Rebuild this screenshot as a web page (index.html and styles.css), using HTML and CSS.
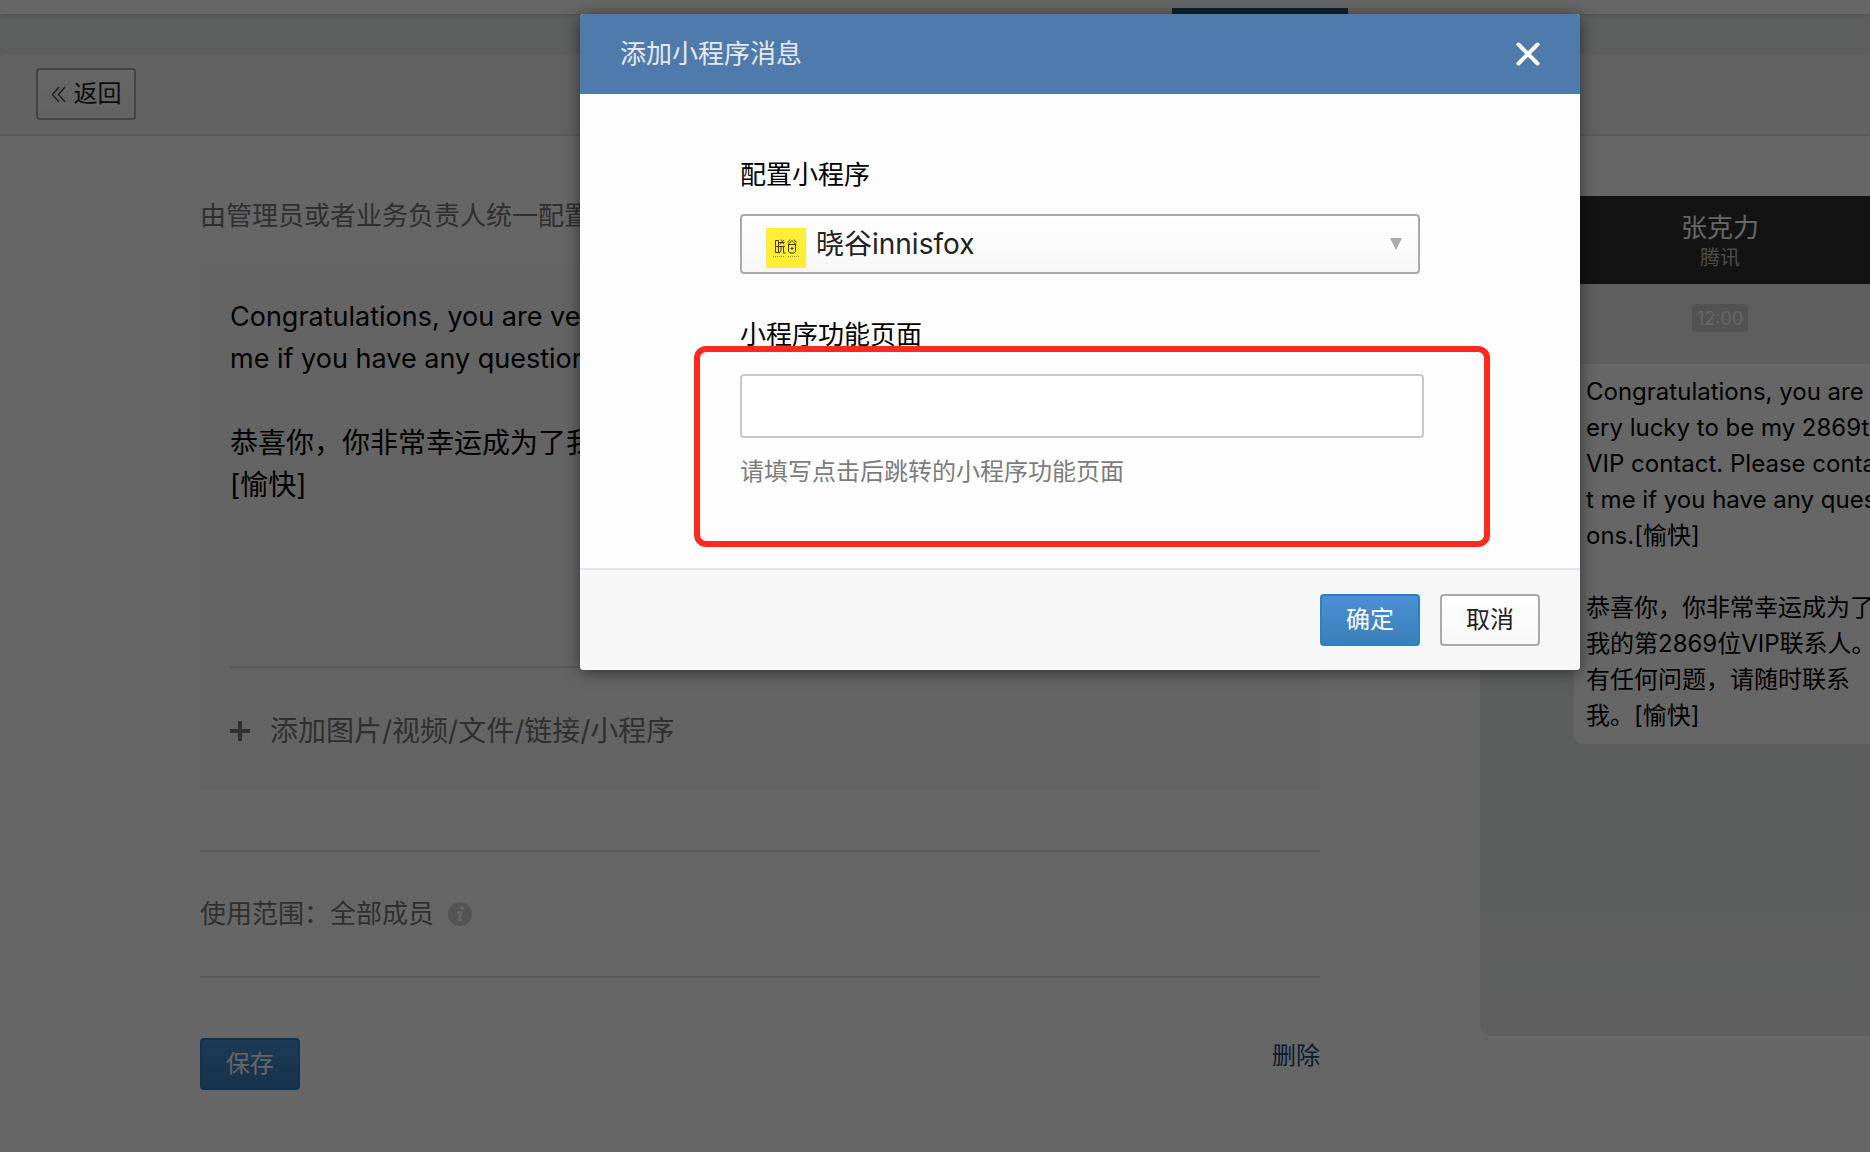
FILE: index.html
```
<!DOCTYPE html>
<html lang="zh-CN">
<head>
<meta charset="utf-8">
<title>添加小程序消息</title>
<link rel="stylesheet" href="styles.css">
</head>
<body>
<div class="page">
  <nav class="topbar"><span class="topbar-active"></span></nav>
  <main class="panel">
    <header class="panel-header">
      <button type="button" class="btn btn-back">
        <svg width="15" height="17" viewBox="0 0 15 17" fill="none" stroke="#555" stroke-width="1.500"><path d="M8 1L1.500 8.500L8 16M14 1L7.500 8.500L14 16"/></svg>
        返回
      </button>
    </header>
    <div class="content">
      <section class="form">
        <p class="intro">由管理员或者业务负责人统一配置</p>
        <div class="editor">
          <div class="editor-text">
            <p class="editor-latin">Congratulations, you are ve<br>me if you have any question</p>
            <p>恭喜你，你非常幸运成为了我<br>[愉快]</p>
          </div>
          <button type="button" class="attach">
            <svg width="20" height="20" viewBox="0 0 20 20" fill="#787878"><path d="M8 0h4v8h8v4h-8v8H8v-8H0V8h8z"/></svg>
            添加图片/视频/文件/链接/小程序
          </button>
        </div>
        <div class="scope">
          <span>使用范围：全部成员</span>
          <svg width="24" height="24" viewBox="0 0 24 24"><circle cx="12" cy="12" r="12" fill="#d2d2d2"/><circle cx="14" cy="6" r="2" fill="#fff"/><path d="M9 10.500h4l-2 7.500q.5 1 2.500-1" fill="none" stroke="#fff" stroke-width="2.500"/></svg>
        </div>
        <div class="actions">
          <button type="button" class="btn btn-primary">保存</button>
          <a class="delete" href="#">删除</a>
        </div>
      </section>
      <aside class="phone">
        <header class="phone-header">
          <strong>张克力</strong>
          <span>腾讯</span>
        </header>
        <div class="phone-time"><time>12:00</time></div>
        <p class="bubble">Congratulations, you are<br>ery lucky to be my 2869t<br>VIP contact. Please conta<br>t me if you have any ques<br>ons.[愉快]<br><br>恭喜你，你非常幸运成为了<br>我的第2869位VIP联系人。<br>有任何问题，请随时联系<br>我。[愉快]</p>
      </aside>
    </div>
  </main>
  <div class="overlay">
    <div class="dialog" role="dialog" aria-labelledby="dialog-title">
      <header class="dialog-header">
        <h2 id="dialog-title">添加小程序消息</h2>
        <button type="button" class="close" aria-label="关闭">
          <svg width="24" height="24" viewBox="0 0 24 24" stroke="#fff" stroke-width="4" stroke-linecap="round"><path d="M2.500 2.500L21.500 21.500M21.500 2.500L2.500 21.500"/></svg>
        </button>
      </header>
      <form class="dialog-body">
        <label for="app">配置小程序</label>
        <div class="picker">
          <select id="app"><option>晓谷innisfox</option></select>
          <svg class="picker-logo" width="40" height="40" viewBox="0 0 40 40"><path fill="#ffed37" d="M0 0h40v40H0z"/><g fill="none" stroke="#3b3712" stroke-width="1"><path d="M9.500 12.500h3v12h-3zM9.500 18.500h3M13 14.500h5.500M15 11.500l3 5M18 12l-4 4.500M13 18.500h6M15 18.500v4l-2 3M17.500 18.500v6.500h2"/><path d="M24 11.500l-2 3M28 11.500l2.500 3M26 12.500l-4 4M26 12.500l4 4M22.500 16.500h7v7l-1.500 1.500h-4l-1.500-1.500zM24.500 20.500h3M26 19v3"/></g><path d="M7 28.500h11M22 28.500h11" stroke="#a69a28" stroke-width="1" stroke-dasharray="1 1"/></svg>
          <svg class="picker-arrow" width="12" height="12" viewBox="0 0 12 12" fill="#aaa"><path d="M0 0h12L6 12z"/></svg>
        </div>
        <label for="path">小程序功能页面</label>
        <div class="field">
          <input id="path" type="text" aria-describedby="path-help">
          <p class="help" id="path-help">请填写点击后跳转的小程序功能页面</p>
          <span class="highlight"></span>
        </div>
      </form>
      <footer class="dialog-footer">
        <button type="button" class="btn btn-primary">确定</button>
        <button type="button" class="btn">取消</button>
      </footer>
    </div>
  </div>
</div>
</body>
</html>
```
FILE: styles.css
```
* {
  box-sizing: border-box;
}

body {
  margin: 0;
  background: #fff;
  color: #000;
  font-family: Inter, "Noto Sans CJK SC", sans-serif;
  font-size: 24px;
  line-height: 36px;
}

p,
h2 {
  margin: 0;
  font-weight: 400;
}

svg {
  flex: none;
}

button,
input,
select {
  font: inherit;
}

.page {
  position: relative;
  min-height: 100vh;
  background: #e6edea;
  overflow: hidden;
}

.topbar {
  display: flex;
  align-items: flex-end;
  height: 14px;
  padding-left: 1172px;
  background: #fff;
  box-shadow: 0 1px 4px rgba(0, 0, 0, 0.15);
}

.topbar-active {
  width: 176px;
  height: 6px;
  background: #2a5576;
}

.panel {
  min-height: calc(100vh - 54px);
  margin-top: 40px;
  border-radius: 8px 0 0;
  background: #fff;
}

.panel-header {
  padding: 14px 36px;
  border-bottom: 2px solid #e3e3e3;
  border-radius: 8px 0 0;
  background: #f6f6f6;
}

.btn {
  display: flex;
  align-items: center;
  justify-content: center;
  width: 100px;
  height: 52px;
  padding: 0;
  border: 2px solid #aaa;
  border-radius: 4px;
  background: linear-gradient(#fff, #f7f7f7);
  color: #222;
}

.btn-back {
  gap: 8px;
}

.btn-primary {
  border-color: #2a82c6;
  background: linear-gradient(#4a90d4, #3b80b9);
  color: #fff;
}

.content {
  display: flex;
  align-items: flex-start;
  gap: 160px;
  padding: 60px 0 60px 200px;
}

.form {
  flex: 1;
}

.intro {
  height: 68px;
  color: #787878;
  font-size: 26px;
  line-height: 40px;
}

.editor {
  padding: 32px 30px 30px;
  background: #fafafa;
}

.editor-text {
  min-height: 370px;
  font-size: 28px;
  line-height: 42px;
}

.editor-latin {
  margin-bottom: 42px;
  font-size: 27px;
}

.attach {
  display: flex;
  align-items: center;
  gap: 20px;
  width: 100%;
  padding: 42px 0 8px;
  border: 0;
  border-top: 2px solid #e4e4e4;
  background: none;
  color: #787878;
  font-size: 28px;
  line-height: 42px;
}

.scope {
  display: flex;
  align-items: center;
  gap: 14px;
  height: 128px;
  margin: 60px 0;
  border: solid #e0e0e0;
  border-width: 2px 0;
  color: #787878;
  font-size: 26px;
}

.actions {
  display: flex;
  justify-content: space-between;
}

.delete {
  color: #1a4a7c;
  text-decoration: none;
}

/* Preview phone, running off the right edge of the window */
.phone {
  width: 390px;
  height: 840px;
  border-radius: 0 0 0 12px;
  background: linear-gradient(#e6ebe8 80%, #ebebeb);
  overflow: hidden;
}

.phone-header {
  display: flex;
  flex-direction: column;
  align-items: center;
  width: 480px;
  height: 88px;
  padding-top: 16px;
  background: #303030;
  color: #fff;
  font-size: 26px;
  line-height: 32px;
}

.phone-header strong {
  font-weight: 400;
}

.phone-header span {
  color: #bbb;
  font-size: 20px;
  line-height: 28px;
}

.phone-time {
  display: flex;
  justify-content: center;
  width: 480px;
  height: 80px;
  padding-top: 20px;
  background: #ebebeb;
}

.phone-time time {
  height: 28px;
  padding: 0 5px;
  border-radius: 4px;
  background: #cecece;
  color: #fff;
  font-size: 18px;
  line-height: 30px;
}

.bubble {
  width: 340px;
  margin-left: 94px;
  padding: 10px 12px;
  border-radius: 8px;
  background: #fff;
  white-space: nowrap;
}

.overlay {
  position: absolute;
  inset: 0;
  padding-top: 14px;
  background: rgba(0, 0, 0, 0.6);
}

.dialog {
  width: 1000px;
  margin-left: calc(50% - 355px);
  border-radius: 4px;
  background: #fdfdfd;
  box-shadow: 0 2px 16px rgba(0, 0, 0, 0.5);
  overflow: hidden;
}

.dialog-header {
  display: flex;
  align-items: center;
  justify-content: space-between;
  height: 80px;
  padding: 0 40px;
  background: #4f7aac;
  color: #e8eaee;
}

.dialog-header h2 {
  font-size: 26px;
  line-height: 40px;
}

.close {
  display: flex;
  padding: 0;
  border: 0;
  background: none;
}

.dialog-body {
  padding: 60px 156px 78px 160px;
}

.dialog-body label {
  display: block;
  height: 60px;
  font-size: 26px;
  line-height: 42px;
}

.picker {
  position: relative;
  width: 680px;
  margin-bottom: 40px;
}

.picker select {
  display: block;
  width: 100%;
  height: 60px;
  padding: 0 40px 0 74px;
  border: 2px solid #aaa;
  border-radius: 4px;
  appearance: none;
  background: linear-gradient(#fff, #f7f7f7);
  color: #222;
  font-size: 28px;
}

.picker-logo {
  position: absolute;
  top: 14px;
  left: 26px;
}

.picker-arrow {
  position: absolute;
  top: 24px;
  right: 18px;
}

.field {
  position: relative;
}

.field input {
  display: block;
  width: 100%;
  height: 64px;
  padding: 0 16px;
  border: 2px solid #c8c8c8;
  border-radius: 4px;
  background: #fff;
}

.help {
  margin-top: 16px;
  color: #7c7c7c;
}

/* Marker frame drawn over the path field */
.highlight {
  position: absolute;
  inset: -28px -66px -57px -46px;
  border: 6px solid #ff2a1f;
  border-radius: 12px;
  pointer-events: none;
}

.dialog-footer {
  display: flex;
  justify-content: flex-end;
  gap: 20px;
  padding: 24px 40px;
  border-top: 2px solid #e5e5ec;
  background: #f7f7f7;
}
```
